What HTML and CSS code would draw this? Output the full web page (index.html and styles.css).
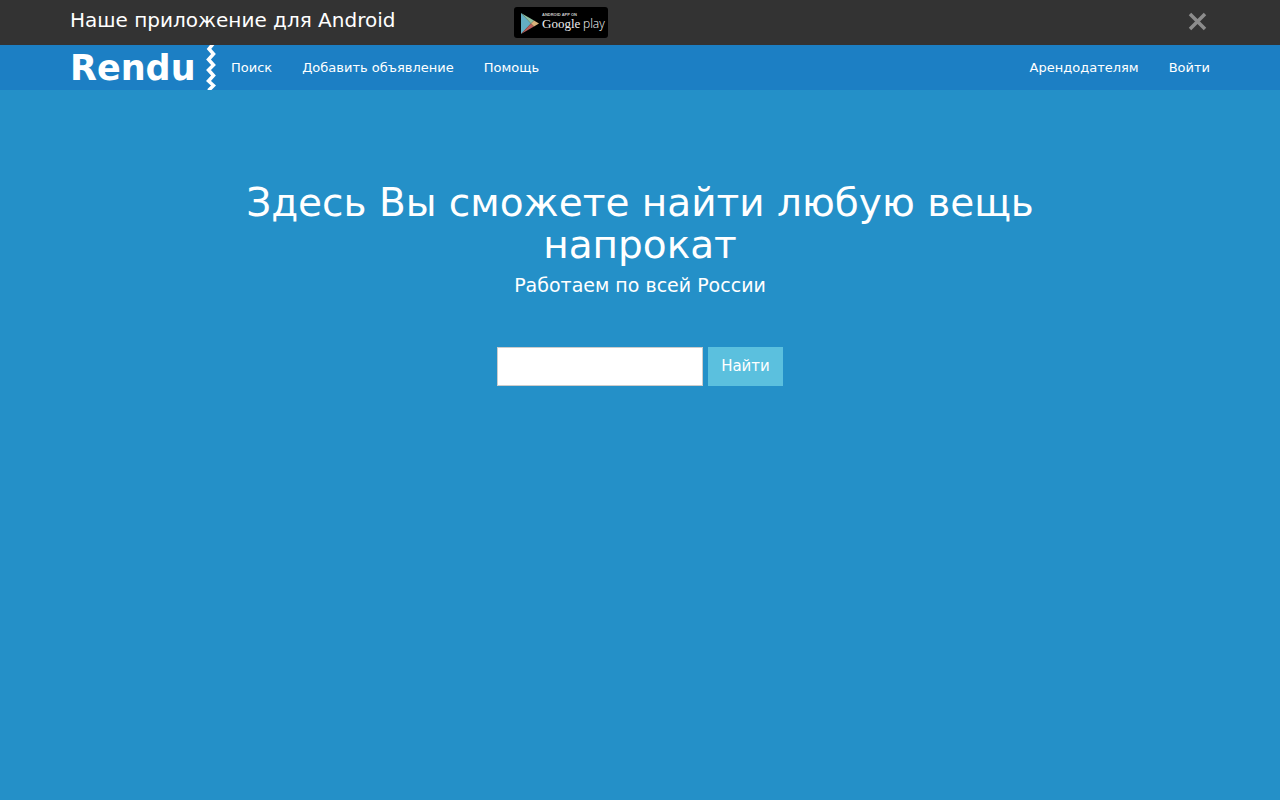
FILE: index.html
```html
<!DOCTYPE html>
<html lang="ru">
<head>
<meta charset="utf-8">
<meta name="viewport" content="width=device-width, initial-scale=1">
<title>Rendu</title>
<link rel="stylesheet" href="styles.css">
</head>
<body>
<aside class="promo">
  <div class="container promo-row">
    <p class="promo-text">Наше приложение для Android</p>
    <div class="promo-side">
      <a class="store" href="#" aria-label="Google Play">
        <svg class="store-badge" viewBox="0 0 94 31" width="94" height="31">
          <rect width="94" height="31" rx="3" fill="#000"/>
          <path d="M7 6v21l10-10.500z" fill="#63aec4"/>
          <path d="M7 6l10 10.500 3-3z" fill="#8fbfa0"/>
          <path d="M7 27l10-10.500 3 3z" fill="#b8605c"/>
          <path d="M17 16.500l3-3 5 3-5 3z" fill="#d9b27c"/>
          <text x="28" y="9" class="badge-small">ANDROID APP ON</text>
          <text x="28" y="21" class="badge-google">Google</text>
          <text x="69" y="21" class="badge-play">play</text>
        </svg>
      </a>
      <button class="close" type="button" aria-label="Закрыть">
        <svg viewBox="0 0 20 20" width="20" height="20"><path d="M3 3l15 15m0-15l-15 15" stroke="#8c8c8c" stroke-width="3.500" fill="none"/></svg>
      </button>
    </div>
  </div>
</aside>
<header class="navbar">
  <nav class="container nav-row">
    <a class="brand" href="#">Rendu</a>
    <svg class="zigzag" viewBox="0 0 10 45" width="10" height="45" aria-hidden="true"><path d="M7-1L3 4l4.500 5-5 5.500 5 5.500-5 5 5 5.500-5 5.500 5 4.500-5 5" fill="none" stroke="#fff" stroke-width="3.500"/></svg>
    <a class="nav-link" href="#">Поиск</a>
    <a class="nav-link" href="#">Добавить объявление</a>
    <a class="nav-link" href="#">Помощь</a>
    <a class="nav-link nav-right" href="#">Арендодателям</a>
    <a class="nav-link nav-last" href="#">Войти</a>
  </nav>
</header>
<main class="hero">
  <h1 class="title">Здесь Вы сможете найти любую вещь напрокат</h1>
  <p class="subtitle">Работаем по всей России</p>
  <form class="search">
    <input class="search-input" type="text" aria-label="Поиск вещей">
    <button class="search-button" type="submit">Найти</button>
  </form>
</main>
</body>
</html>
```
FILE: styles.css
```css
* {
  box-sizing: border-box;
}

body {
  margin: 0;
  min-height: 100vh;
  background: #2490c8;
  color: #fff;
  font-family: "DejaVu Sans", Verdana, sans-serif;
  font-size: 15px;
}

a {
  color: inherit;
  text-decoration: none;
}

svg {
  display: block;
}

.container {
  max-width: 1170px;
  margin: 0 auto;
  padding: 0 15px;
}

.promo {
  background: #333;
}

.promo-row {
  display: grid;
  grid-template-columns: 444px 1fr;
  min-height: 45px;
}

.promo-text {
  margin: 0;
  font-size: 20px;
  line-height: 40px;
}

.promo-side {
  display: flex;
  justify-content: space-between;
  align-items: flex-start;
  padding-top: 7px;
}

.badge-small {
  fill: #ccc;
  font: bold 4px "Liberation Sans", sans-serif;
}

.badge-google {
  fill: #eee;
  font: 13px "Liberation Serif", serif;
}

.badge-play {
  fill: #fff;
  font: 300 12px "Open Sans", sans-serif;
}

.close {
  padding: 4px 3px;
  border: 0;
  background: none;
  cursor: pointer;
}

.navbar {
  background: #1c7fc4;
}

.nav-row {
  display: flex;
  min-height: 45px;
}

.brand {
  width: 136px;
  font-size: 35px;
  font-weight: bold;
  line-height: 46px;
  height: 45px;
}

.nav-link {
  padding: 0 15px;
  font-size: 13px;
  line-height: 45px;
}

.nav-right {
  margin-left: auto;
}

.nav-last {
  padding-right: 0;
}

.hero {
  max-width: 830px;
  margin: 0 auto;
  padding: 92px 15px 0;
  text-align: center;
}

.title {
  margin: 0;
  font-size: 39px;
  font-weight: normal;
  line-height: 42px;
}

.subtitle {
  margin: 8px 0 0;
  font-size: 19px;
  line-height: 22px;
}

.search {
  display: flex;
  justify-content: center;
  gap: 5px;
  margin-top: 51px;
}

.search-input {
  width: 206px;
  height: 39px;
  padding: 8px 12px;
  border: 1px solid #ccc;
  background: #fff;
  font: inherit;
}

.search-button {
  height: 39px;
  padding: 0 12px 2px;
  border: 1px solid #5bc0de;
  background: #5bc0de;
  color: #fff;
  font: inherit;
  cursor: pointer;
}
```
